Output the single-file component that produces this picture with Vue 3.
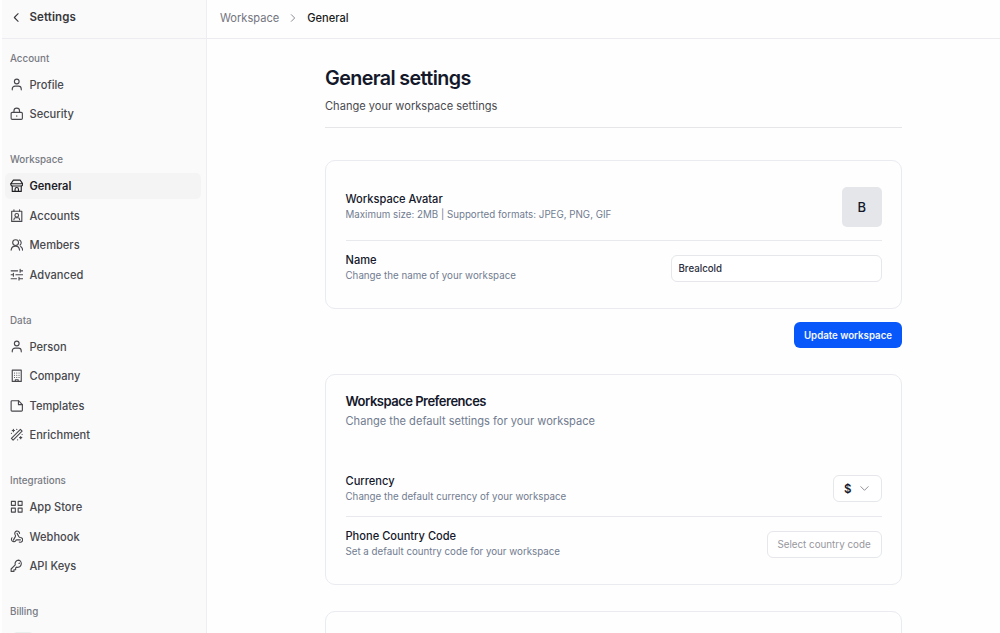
<template>
  <div class="layout">
    <aside class="sidebar">
      <div class="sidebar-header">
        <svg class="back" viewBox="0 0 24 24"><path d="M15 5l-7 7 7 7" /></svg>
        <span>Settings</span>
      </div>
      <nav class="nav">
        <div v-for="g in groups" :key="g.title" class="group">
          <div class="group-title">{{ g.title }}</div>
          <div class="group-items">
            <a v-for="item in g.items" :key="item.label" class="nav-item" :class="{ active: item.label === active, plan: item.plan }" @click="active = item.label">
              <svg v-if="item.icon" class="icon" viewBox="0 0 24 24"><path v-for="d in icons[item.icon]" :key="d" :d="d" /></svg>
              <span>{{ item.label }}</span>
            </a>
          </div>
        </div>
      </nav>
    </aside>

    <main class="main">
      <header class="topbar">
        <span class="crumb">Workspace</span>
        <svg class="crumb-sep" viewBox="0 0 24 24"><path d="M8 4l8 8-8 8" /></svg>
        <span class="crumb current">General</span>
      </header>

      <div class="content">
        <div class="page-head">
          <h1 class="page-title">General settings</h1>
          <p class="page-sub">Change your workspace settings</p>
        </div>

        <section class="card">
          <div class="row avatar-row">
            <div class="row-text">
              <div class="label">Workspace Avatar</div>
              <div class="hint">Maximum size: 2MB | Supported formats: JPEG, PNG, GIF</div>
            </div>
            <div class="avatar">B</div>
          </div>
          <div class="row">
            <div class="row-text">
              <div class="label">Name</div>
              <div class="hint">Change the name of your workspace</div>
            </div>
            <input v-model="name" class="input" type="text" spellcheck="false" />
          </div>
        </section>

        <div class="actions">
          <button class="btn-primary">Update workspace</button>
        </div>

        <section class="card prefs">
          <div class="card-head">
            <h2 class="card-title">Workspace Preferences</h2>
            <p class="card-sub">Change the default settings for your workspace</p>
          </div>
          <div class="row currency-row">
            <div class="row-text">
              <div class="label">Currency</div>
              <div class="hint">Change the default currency of your workspace</div>
            </div>
            <button class="select">
              <span>$</span>
              <svg class="caret" viewBox="0 0 24 24"><path d="M4 8l8 8 8-8" /></svg>
            </button>
          </div>
          <div class="row">
            <div class="row-text">
              <div class="label">Phone Country Code</div>
              <div class="hint">Set a default country code for your workspace</div>
            </div>
            <button class="select placeholder">Select country code</button>
          </div>
        </section>

        <section class="card next"></section>
      </div>
    </main>
  </div>
</template>

<script setup>
import { ref } from 'vue'

const active = ref('General')
const name = ref('Brealcold')

const groups = [
  { title: 'Account', items: [{ label: 'Profile', icon: 'user' }, { label: 'Security', icon: 'lock' }] },
  {
    title: 'Workspace',
    items: [
      { label: 'General', icon: 'store' },
      { label: 'Accounts', icon: 'badge' },
      { label: 'Members', icon: 'users' },
      { label: 'Advanced', icon: 'sliders' },
    ],
  },
  {
    title: 'Data',
    items: [
      { label: 'Person', icon: 'user' },
      { label: 'Company', icon: 'building' },
      { label: 'Templates', icon: 'file' },
      { label: 'Enrichment', icon: 'wand' },
    ],
  },
  {
    title: 'Integrations',
    items: [
      { label: 'App Store', icon: 'grid' },
      { label: 'Webhook', icon: 'webhook' },
      { label: 'API Keys', icon: 'key' },
    ],
  },
  { title: 'Billing', items: [{ label: '', plan: true }] },
]

const icons = {
  user: ['M12 2a4.2 4.2 0 1 0 0 8.4A4.2 4.2 0 1 0 12 2z', 'M4 21v-1.5a5 5 0 0 1 5-5h6a5 5 0 0 1 5 5V21'],
  lock: ['M4 9.5h16a2 2 0 0 1 2 2V20a2 2 0 0 1-2 2H4a2 2 0 0 1-2-2v-8.5a2 2 0 0 1 2-2z', 'M7 9.5V7a5 5 0 0 1 10 0v2.5', 'M12 15.5v.8'],
  store: ['M6 2h12l4.5 6.5h-21z', 'M1.5 8.5V10a3 3 0 0 0 3 2.5h15a3 3 0 0 0 3-2.5V8.5', 'M4 13v9h16v-9', 'M9 22v-4a3 3 0 0 1 6 0v4'],
  badge: ['M3 4h18v18H3z', 'M7 1.5V4M17 1.5V4', 'M12 8a3.2 3.2 0 1 0 0 6.4A3.2 3.2 0 1 0 12 8z', 'M7 19v-.5a3 3 0 0 1 3-3h4a3 3 0 0 1 3 3v.5'],
  users: ['M10 3a5.2 5.2 0 1 0 0 10.4A5.2 5.2 0 1 0 10 3z', 'M2 21.5c.5-4 3.5-7 8-7s6.5 3 7 7', 'M17 3.5a5.5 5.5 0 0 1 1 9', 'M19 15c2 1.2 3.3 3.5 3.5 6.5'],
  sliders: ['M2 5h11.5M18 5h4.5M18 2.5v5', 'M2 12h4M10.5 12h12M6 9.5v5', 'M2 19h9.5M16 19h6.5M16 16.5v5'],
  building: ['M4 2h16v20H4z', 'M8 7h.1M12 7h.1M16 7h.1M8 11h.1M12 11h.1M16 11h.1M8 15h.1M12 15h.1M16 15h.1', 'M9.5 22v-3h5v3'],
  file: ['M3.5 3H15l7 7v10a1.5 1.5 0 0 1-1.5 1.5h-17A1.5 1.5 0 0 1 2 20V4.5A1.5 1.5 0 0 1 3.5 3z', 'M15 3v7h7'],
  wand: ['M2.5 18.5L18.5 2.5l3 3-16 16z', 'M6 2.5v4M4 4.5h4', 'M19 15v4M17 17h4', 'M12 2.5h.1M2.5 9.5h.1M21.5 11.5h.1M13.5 21h.1'],
  grid: ['M2.5 2.5h7v7h-7z', 'M14.5 2.5h7v7h-7z', 'M2.5 14.5h7v7h-7z', 'M14.5 14.5h7v7h-7z'],
  webhook: ['M18.5 17.5H12c-1 0-1.5.7-2 1.7a4.2 4.2 0 1 1-6.5-5.4', 'M6 18l3.7-6.7c.5-1 .1-1.8-.6-2.8a4.3 4.3 0 1 1 7.9-2.5', 'M12.5 6l3.3 6c.6 1 1.5 1.2 2.7 1.3a4.2 4.2 0 1 1-2 8'],
  key: ['M15.5 2a6.5 6.5 0 0 0-6.2 8.5L2 17.8V22h5v-3h3v-3l1.5-1.5A6.5 6.5 0 1 0 15.5 2z', 'M16 8l.8-.8'],
}
</script>

<style>
body { background: #fefefe; overflow: hidden; }
</style>

<style scoped>
* { box-sizing: border-box; }
.layout {
  display: flex; height: 633px; overflow: hidden;
  font-family: Inter, "Liberation Sans", sans-serif; font-size: 11.1px; color: #14182b;
}
h1, h2, p { margin: 0; }
button, input { font-family: inherit; }
svg { fill: none; stroke: currentColor; stroke-width: 2; stroke-linecap: round; stroke-linejoin: round; flex: none; }

/* sidebar */
.sidebar { width: 207px; flex: none; background: #fafafa; border-left: 2px solid #fefefe; border-right: 1px solid #ededf2; }
.sidebar-header {
  display: flex; align-items: center; gap: 6.4px; height: 39px; padding: 0 8px 4px;
  border-bottom: 1px solid #ececf1; font-size: 11.5px; font-weight: 600; letter-spacing: 0.12px; color: #38383d;
}
.back { width: 13px; height: 13px; }
.nav { display: flex; flex-direction: column; gap: 25px; padding: 11.8px 5px 0 3px; }
.group-title { height: 16px; line-height: 16px; padding-left: 5px; margin-bottom: 4.8px; font-size: 9.8px; font-weight: 500; color: #777982; }
.group-items { display: flex; flex-direction: column; gap: 3.3px; }
.nav-item {
  display: flex; align-items: center; gap: 6.5px; height: 26.2px; padding: 0 4.5px;
  border-radius: 5px; font-weight: 500; color: #48484d; cursor: pointer;
}
.nav-item.active { background: #f4f4f5; font-weight: 600; color: #202024; }
.nav-item.plan { width: 22px; margin: 7px 0 0 7px; background: #e9efed; }
.icon { width: 13.5px; height: 13.5px; }

/* top bar */
.main { flex: 1; min-width: 0; }
.topbar { display: flex; align-items: center; height: 39px; padding: 0 13px 3px; border-bottom: 1px solid #ececf0; }
.crumb { color: #73757e; }
.crumb.current { font-weight: 500; color: #1c1c20; }
.crumb-sep { width: 10px; height: 10px; margin: 0 9px; color: #73757e; }

/* content */
.content { width: 577px; margin-left: 118px; padding-top: 26px; }
.page-head { height: 63px; border-bottom: 1px solid #e6e6e9; }
.page-title { font-size: 19.7px; line-height: 27px; font-weight: 600; letter-spacing: -0.6px; }
.page-sub { margin-top: 5px; line-height: 18px; color: #4a4a50; }
.card { border: 1px solid #e9ebf0; border-radius: 10px; padding: 26px 19.5px 0; margin-top: 32px; height: 149px; }
.row { display: flex; align-items: center; justify-content: space-between; height: 54px; }
.row-text { display: flex; flex-direction: column; }
.label { line-height: 16px; font-weight: 500; }
.hint { font-size: 9.75px; line-height: 16px; color: #717c90; }
.avatar-row { padding-bottom: 14px; border-bottom: 1px solid #e8e9ec; }
.avatar {
  display: flex; align-items: center; justify-content: center; width: 39.5px; height: 40px;
  border-radius: 5px; background: #e5e6ea; font-size: 13px; font-weight: 500;
}
.input {
  width: 210.5px; height: 27px; padding: 0 6.5px; border: 1px solid #e6e7eb; border-radius: 6px;
  background: #fff; font-size: 9.7px; font-weight: 500; color: #2a2d3c; outline: none;
}
.actions { display: flex; justify-content: flex-end; margin-top: 13px; }
.btn-primary {
  width: 108px; height: 26px; padding: 0; border: none; border-radius: 6px;
  background: #0757fb; color: #f4f7ff; font-size: 9.7px; font-weight: 600;
}

/* preferences */
.prefs { height: 211px; margin-top: 26px; padding-top: 16px; }
.card-head { height: 84px; }
.card-title { font-size: 13px; line-height: 21px; font-weight: 600; letter-spacing: -0.5px; }
.card-sub { line-height: 19px; color: #717c90; }
.currency-row { height: 42px; padding-bottom: 14px; border-bottom: 1px solid #e8e9ee; }
.select {
  display: flex; align-items: center; justify-content: center; gap: 8px; width: 48.5px; height: 27px; padding: 0; border: 1px solid #e6e7eb;
  border-radius: 6px; background: #fff; font-size: 11.5px; font-weight: 600; color: #14182b;
}
.select.placeholder { width: 115px; font-size: 9.8px; font-weight: 400; color: #97979d; }
.caret { width: 11px; height: 11px; color: #85868d; }
.next { margin-top: 26px; }
</style>
